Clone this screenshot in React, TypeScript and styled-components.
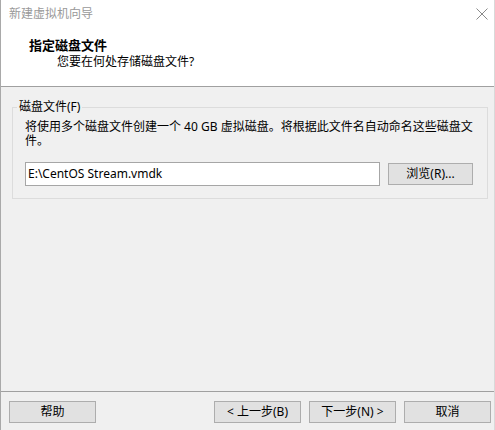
import React from 'react';
import styled, { createGlobalStyle } from 'styled-components';

const GlobalStyle = createGlobalStyle`
  html, body {
    margin: 0;
    padding: 0;
    background: #ffffff;
  }
  * {
    box-sizing: border-box;
  }
`;

const font = `"Noto Sans", "Noto Sans CJK SC", sans-serif`;

const Window = styled.div`
  width: 495px;
  height: 430px;
  display: flex;
  flex-direction: column;
  background: #f0f0f0;
  border-left: 1px solid #a9a9a9;
  border-right: 1px solid #d9d9d9;
  font-family: ${font};
  font-size: 12px;
  color: #000;
  overflow: hidden;
`;

const TitleBar = styled.div`
  height: 30px;
  display: flex;
  align-items: center;
  justify-content: space-between;
  padding: 0 0 2px 8px;
  background: #ffffff;
`;

const Title = styled.span`
  color: #999999;
  font-size: 12px;
  line-height: 16px;
`;

const CloseButton = styled.div`
  width: 30px;
  height: 28px;
  display: flex;
  align-items: center;
  justify-content: center;
  padding-left: 6px;
`;

const Header = styled.div`
  height: 57px;
  background: #ffffff;
  border-bottom: 1px solid #a0a0a0;
  padding: 7px 0 0 28px;
  display: flex;
  flex-direction: column;
  gap: 1px;
`;

const Heading = styled.div`
  font-weight: 700;
  font-size: 13px;
  line-height: 16px;
`;

const SubHeading = styled.div`
  line-height: 16px;
  padding-left: 28px;
`;

const Body = styled.div`
  flex: 1;
  padding: 12px 6px 0 11px;
`;

const Group = styled.fieldset`
  margin: 0;
  padding: 5px 12px 12px 12px;
  border: 1px solid #dcdcdc;
  min-width: 0;
`;

const GroupLabel = styled.legend`
  padding: 0 2px;
  margin-left: -8px;
  line-height: 16px;
`;

const Description = styled.p`
  margin: 0;
  line-height: 14px;
  width: 452px;
`;

const FileRow = styled.div`
  display: flex;
  align-items: center;
  gap: 8px;
  margin-top: 14px;
`;

const PathInput = styled.div`
  width: 355px;
  height: 24px;
  background: #ffffff;
  border: 1px solid #a6a6a6;
  padding: 0 2px;
  display: flex;
  align-items: center;
  line-height: 16px;
`;

const Button = styled.button<{ $width?: number }>`
  width: ${p => p.$width ?? 87}px;
  height: 22px;
  padding: 0;
  background: #e1e1e1;
  border: 1px solid #adadad;
  font-family: ${font};
  font-size: 12px;
  line-height: 16px;
  color: #000;
`;

const Footer = styled.div`
  height: 39px;
  border-top: 1px solid #a0a0a0;
  display: flex;
  align-items: flex-start;
  padding: 9px 3px 0 8px;
`;

const Spacer = styled.div`
  flex: 1;
`;

const ButtonGroup = styled.div`
  display: flex;
  gap: 8px;
`;

const CloseIcon = () => (
  <svg width="12" height="12" viewBox="0 0 12 12">
    <path d="M0.5 0.5 L11.5 11.5 M11.5 0.5 L0.5 11.5" stroke="#8a8a8a" strokeWidth="1" fill="none" />
  </svg>
);

export default function App() {
  return (
    <>
      <GlobalStyle />
      <Window>
        <TitleBar>
          <Title>新建虚拟机向导</Title>
          <CloseButton>
            <CloseIcon />
          </CloseButton>
        </TitleBar>
        <Header>
          <Heading>指定磁盘文件</Heading>
          <SubHeading>您要在何处存储磁盘文件?</SubHeading>
        </Header>
        <Body>
          <Group>
            <GroupLabel>磁盘文件(F)</GroupLabel>
            <Description>
              将使用多个磁盘文件创建一个 40 GB 虚拟磁盘。将根据此文件名自动命名这些磁盘文件。
            </Description>
            <FileRow>
              <PathInput>E:\CentOS Stream.vmdk</PathInput>
              <Button $width={85}>浏览(R)...</Button>
            </FileRow>
          </Group>
        </Body>
        <Footer>
          <Button>帮助</Button>
          <Spacer />
          <ButtonGroup>
            <Button>&lt; 上一步(B)</Button>
            <Button>下一步(N) &gt;</Button>
            <Button>取消</Button>
          </ButtonGroup>
        </Footer>
      </Window>
    </>
  );
}
